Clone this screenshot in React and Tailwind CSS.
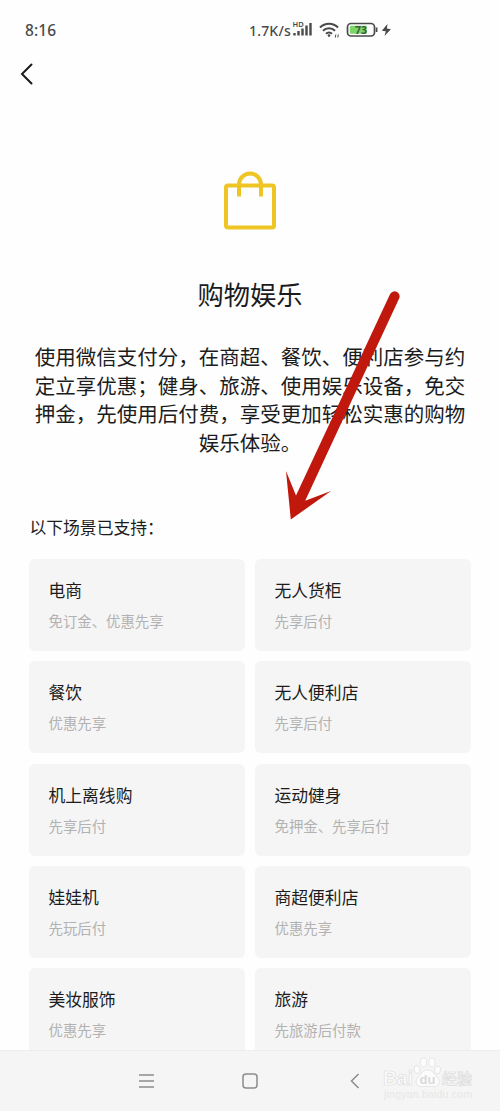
import React from "react"

const scenes = [
    { title: "电商", note: "免订金、优惠先享" },
    { title: "无人货柜", note: "先享后付" },
    { title: "餐饮", note: "优惠先享" },
    { title: "无人便利店", note: "先享后付" },
    { title: "机上离线购", note: "先享后付" },
    { title: "运动健身", note: "免押金、先享后付" },
    { title: "娃娃机", note: "先玩后付" },
    { title: "商超便利店", note: "优惠先享" },
    { title: "美妆服饰", note: "优惠先享" },
    { title: "旅游", note: "先旅游后付款" },
];

const intro = [
    "使用微信支付分，在商超、餐饮、便利店参与约",
    "定立享优惠；健身、旅游、使用娱乐设备，免交",
    "押金，先使用后付费，享受更加轻松实惠的购物",
    "娱乐体验。",
];

const StatusBar = () => (
    <div className="flex h-[60px] shrink-0 items-center justify-between pl-[25px] pr-[108px] font-['Noto_Sans','Noto_Sans_CJK_SC',sans-serif] text-[#4a4a4a]">
        <span className="pt-px text-[15.5px] font-medium tracking-[0.1px]">8:16</span>
        <div className="flex items-center">
            <span className="text-[14px] font-medium tracking-[0.2px]">1.7K/s</span>
            {/* HD signal */}
            <svg width="21" height="20" viewBox="0 0 21 20" className="ml-px">
                <text x="0.5" y="7" fontSize="7.500" fontWeight="600" fill="#4a4a4a">HD</text>
                <path d="M2.500 15.500v-2.500M6.500 15.500v-4.500M10.500 15.500v-7M14.500 15.500v-10M18.500 15.500v-12.500" stroke="#4a4a4a" strokeWidth="2.400" />
            </svg>
            {/* Wifi */}
            <svg width="21" height="18" viewBox="0 0 21 18" className="ml-[6px]" fill="none" stroke="#4a4a4a" strokeWidth="2">
                <path d="M1 6.500a12.500 12.500 0 0 1 18 0M4 9.800a8.300 8.300 0 0 1 12 0M7 12.800a4.300 4.300 0 0 1 6 0" />
                <circle cx="10" cy="14.600" r="1.300" fill="#4a4a4a" stroke="none" />
                <path d="M16.800 13.500l-.5 3M19.300 13.500l-.5 3" strokeWidth="1" />
            </svg>
            {/* Battery */}
            <svg width="33" height="16" viewBox="0 0 33 16" className="ml-[6px]">
                <rect x="1.500" y="1.500" width="27" height="12.500" rx="3.500" fill="#fff" stroke="#4a4a4a" strokeWidth="1.700" />
                <rect x="3.800" y="3.800" width="17" height="8" rx="1.200" fill="#79d667" />
                <path d="M30.600 5.500v4.500" stroke="#4a4a4a" strokeWidth="1.700" />
                <text x="15" y="11.700" textAnchor="middle" fontSize="10.500" fontWeight="700" fill="#3d5c38">73</text>
            </svg>
            <svg width="11" height="14" viewBox="0 0 11 14" className="ml-[2px]">
                <path d="M6.500 1L.8 7.800l4 .5L3.500 13l6.400-6.800-4-.7z" fill="#4a4a4a" />
            </svg>
        </div>
    </div>
)

const SceneCard = ({ title, note }) => (
    <div className="h-[92px] rounded-[6px] bg-[#f5f5f5] pl-[19.5px] pt-[18px]">
        <div className="text-[16.8px] leading-[26px] text-[#1c1c1c]">{title}</div>
        <div className="mt-[7px] text-[14.4px] leading-[22px] text-[#b2b2b2]">{note}</div>
    </div>
)

const Watermark = () => (
    <svg width="98" height="50" viewBox="0 0 98 50" className="absolute left-[382px] top-[2px]">
        <g fill="#fcfcfc" stroke="#dcdcdc" strokeWidth="0.7">
            <text x="1" y="32" fontSize="21" fontFamily="Liberation Sans" fontWeight="700" textLength="30" lengthAdjust="spacingAndGlyphs">Bai</text>
            <ellipse cx="35" cy="16.500" rx="3" ry="4" transform="rotate(-15 35 16.500)" />
            <ellipse cx="41.500" cy="9.500" rx="3.200" ry="4.500" />
            <ellipse cx="50" cy="9.500" rx="3.200" ry="4.500" />
            <ellipse cx="55.500" cy="17" rx="3" ry="4" transform="rotate(15 55.500 17)" />
            <path d="M45.500 17c-5 0-6 4.500-9 7-3.500 3-3.500 9 2 9.500 3 .3 4.500-.4 7-.4s4.500.7 7.500.4c5-.5 5.500-6.500 2-9.500-3-2.500-4-7-9.500-7z" />
            <text x="60" y="31" fontSize="15" fontWeight="500" fontFamily="Noto Sans CJK SC">经验</text>
        </g>
        <text x="45.500" y="30.500" textAnchor="middle" fontSize="13" fontWeight="700" fontFamily="Liberation Sans" fill="#dadada">du</text>
        <text x="2" y="45" fontSize="10.500" fontFamily="Liberation Sans" fill="#e7e7e7" textLength="88">jingyan.baidu.com</text>
    </svg>
)

const NavBar = () => (
    <div className="relative flex h-[61px] shrink-0 items-center border-t border-[#ededed] bg-[#f5f5f5] pl-[138px]">
        <svg width="16" height="16" viewBox="0 0 16 16" stroke="#8c8c8c" strokeWidth="1.300">
            <path d="M1 2h15M1 8h15M1 14h15" />
        </svg>
        <svg width="16" height="16" viewBox="0 0 16 16" fill="none" stroke="#8c8c8c" strokeWidth="1.500" className="ml-[88px]">
            <rect x="1" y="1" width="14" height="14" rx="3" />
        </svg>
        <svg width="10" height="16" viewBox="0 0 10 16" fill="none" stroke="#8c8c8c" strokeWidth="1.500" className="ml-[92px]">
            <path d="M8.500 1L1.500 8l7 7" />
        </svg>
        <Watermark />
    </div>
)

export default function App() {
    return (
        <div className="relative flex h-[1111px] w-[500px] flex-col overflow-hidden bg-[#fefefe] font-['Noto_Sans_CJK_SC',sans-serif] text-[#1c1c1c]">
            <StatusBar />

            <main className="min-h-0 flex-1 overflow-hidden">
                <svg width="14" height="22" viewBox="0 0 14 22" fill="none" stroke="#1a1a1a" strokeWidth="2" strokeLinecap="round" className="ml-[20px] mt-[3px]">
                    <path d="M11.500 1.500L2 11l9.500 9.500" />
                </svg>

                <svg width="56" height="62" viewBox="0 0 56 62" fill="none" stroke="#efc526" strokeWidth="4" className="mx-auto mt-[85px]">
                    <rect x="4" y="15.500" width="48" height="42" rx="2" />
                    <path d="M17 26.500V14.500a11 11 0 0 1 22 0v12" />
                </svg>

                <h1 className="mt-[42px] text-center text-[26.3px] leading-[40px]">购物娱乐</h1>

                <div className="mt-[28px] text-center text-[20.5px] leading-[28.7px]">
                    {intro.map((line) => (
                        <p key={line} className="whitespace-nowrap">{line}</p>
                    ))}
                </div>

                <h2 className="ml-[29.5px] mt-[57px] text-[16.8px] leading-[26px]">以下场景已支持：</h2>

                <div className="ml-[29px] mt-[19px] grid w-[442px] grid-cols-2 gap-x-[10px] gap-y-[10.4px]">
                    {scenes.map((s) => (
                        <SceneCard key={s.title} title={s.title} note={s.note} />
                    ))}
                </div>
            </main>

            <NavBar />

            {/* Pointer arrow */}
            <svg width="120" height="240" viewBox="280 285 120 240" className="absolute left-[280px] top-[285px]" fill="#c0180c">
                <path d="M390 294.200a5 5 0 0 1 9.100 4.400L305.200 500.800 331 491 290.800 519.500 286 471 296 495.500z" />
            </svg>
        </div>
    )
}
